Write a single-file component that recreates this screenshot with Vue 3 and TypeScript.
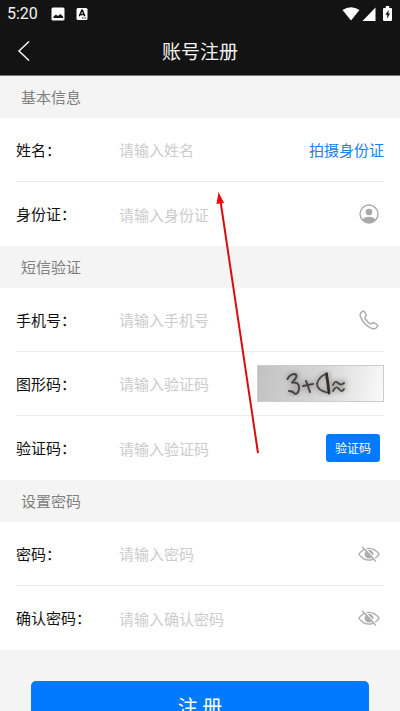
<script setup lang="ts">
import { reactive } from 'vue'

type Extra = 'scan' | 'contact' | 'phone' | 'captcha' | 'sms' | 'eye'

interface Field {
  id: string
  label: string
  placeholder: string
  type: string
  extra: Extra
}

interface Section {
  title: string
  fields: Field[]
}

const sections: Section[] = [
  {
    title: '基本信息',
    fields: [
      { id: 'name', label: '姓名：', placeholder: '请输入姓名', type: 'text', extra: 'scan' },
      { id: 'idcard', label: '身份证：', placeholder: '请输入身份证', type: 'text', extra: 'contact' },
    ],
  },
  {
    title: '短信验证',
    fields: [
      { id: 'phone', label: '手机号：', placeholder: '请输入手机号', type: 'tel', extra: 'phone' },
      { id: 'captcha', label: '图形码：', placeholder: '请输入验证码', type: 'text', extra: 'captcha' },
      { id: 'sms', label: '验证码：', placeholder: '请输入验证码', type: 'text', extra: 'sms' },
    ],
  },
  {
    title: '设置密码',
    fields: [
      { id: 'password', label: '密码：', placeholder: '请输入密码', type: 'password', extra: 'eye' },
      { id: 'confirm', label: '确认密码：', placeholder: '请输入确认密码', type: 'password', extra: 'eye' },
    ],
  },
]

const form = reactive<Record<string, string>>({})
const visible = reactive<Record<string, boolean>>({})

function inputType(field: Field): string {
  return field.type === 'password' && visible[field.id] ? 'text' : field.type
}
</script>

<template>
  <div class="page" lang="zh-CN">
    <header class="top">
      <div class="status">
        <span class="clock">5:20</span>
        <svg class="status-icon" viewBox="0 0 14 14" width="14" height="14" aria-hidden="true">
          <rect x="0.5" y="0.5" width="13" height="13" rx="1.5" fill="#fff" />
          <path d="M2.5 11V9.5L5 7.500l1.800 1.500L9.500 7l2.500 2.500V11z" fill="#131313" />
        </svg>
        <svg class="status-icon" viewBox="0 0 14 14" width="14" height="14" aria-hidden="true">
          <rect x="1.5" y="1" width="11" height="12" rx="1.5" fill="#fff" />
          <path d="M4.3 9.3L6.8 3.2h.6l2.4 6.1M5.2 7.4h3.7" fill="none" stroke="#131313" stroke-width="1.5" />
          <path d="M7 11h4.5" stroke="#131313" stroke-width="1" stroke-dasharray="1 .6" />
        </svg>
        <span class="spacer"></span>
        <svg viewBox="0 0 52 16" width="52" height="16" aria-hidden="true">
          <path d="M1.500 4Q10 -1.500 18.500 4L10 14.600z" fill="#fff" />
          <path d="M34.500 1.500V15H21.500z" fill="#fff" />
          <path d="M43 2h1.800V0h3.400v2H50q1 0 1 1v11q0 1-1 1h-7q-1 0-1-1V3q0-1 1-1z" fill="#fff" />
          <path d="M47.800 3.800L44.400 8.700h1.800v4L49 7.500h-1.700z" fill="#131313" />
        </svg>
      </div>
      <nav class="nav">
        <button class="back" type="button" aria-label="返回">
          <svg viewBox="0 0 14 20" width="14" height="20">
            <path d="M12 .5L2 10L12 19.500" fill="none" stroke="#f4f4f4" stroke-width="1.500" />
          </svg>
        </button>
        <h1>账号注册</h1>
      </nav>
    </header>

    <form @submit.prevent>
      <section v-for="section in sections" :key="section.title">
        <h2>{{ section.title }}</h2>
        <div class="rows">
          <div v-for="field in section.fields" :key="field.id" class="row">
            <label :for="field.id">{{ field.label }}</label>
            <input
              :id="field.id"
              v-model="form[field.id]"
              :type="inputType(field)"
              :placeholder="field.placeholder"
            />
            <a v-if="field.extra === 'scan'" class="scan" href="#">拍摄身份证</a>
            <svg v-else-if="field.extra === 'contact'" class="icon" viewBox="0 0 22 22" width="22" height="22" aria-hidden="true">
              <circle cx="11" cy="11" r="9" fill="none" stroke="#a9a9a9" stroke-width="1.400" />
              <circle cx="11" cy="9" r="3.300" fill="#a9a9a9" />
              <path d="M4.700 16.500Q6.500 13.700 11 13.700T17.300 16.500Q15 19.700 11 19.700T4.700 16.500z" fill="#a9a9a9" />
            </svg>
            <svg v-else-if="field.extra === 'phone'" class="icon" viewBox="0 0 22 22" width="22" height="22" aria-hidden="true">
              <path
                d="M2.600 4.200L4.600 2.200Q5.600 1.500 6.300 2.600L8.100 5.500Q8.600 6.600 7.500 7.500Q6.300 8.500 7.300 10Q9.200 12.900 11.800 14.700Q13.100 15.500 14.200 14.300Q15.200 13.200 16.300 13.800L19.200 15.800Q20.200 16.600 19.300 17.600L17.800 19.200Q16.300 20.400 13.700 19.300Q5.700 15.600 2.300 7.400Q1.600 5.400 2.600 4.200z"
                fill="none"
                stroke="#a9a9a9"
                stroke-width="1.400"
              />
            </svg>
            <button v-else-if="field.extra === 'captcha'" class="captcha" type="button" aria-label="刷新图形码">
              <svg viewBox="1 0 125 35" width="125" height="35">
                <defs>
                  <filter id="ink-shadow" x="-20%" y="-20%" width="140%" height="140%">
                    <feGaussianBlur stdDeviation="2.500" />
                  </filter>
                </defs>
                <g fill="none" stroke-linecap="round" stroke-linejoin="round">
                  <path
                    d="M31 12Q37 6 40 9Q40 14 35 17Q42 17 42 22Q41 27 33 26M46 20L56 18M49 15L52 25M70 8Q60 12 60 20Q62 25 71 25M70 8L72 27M76 18Q80 14 82 17T87 16M76 24Q80 20 82 23T87 22"
                    stroke="#8b8784"
                    stroke-width="5"
                    opacity=".55"
                    filter="url(#ink-shadow)"
                  />
                  <path d="M30.500 13Q33 8 38 8Q42 10 35 16.500Q42 16 42 21Q42 28 38 28Q36 25 32 25" stroke="#474442" stroke-width="2" />
                  <path d="M46 20L56 18M49 15Q51 20 53 26" stroke="#474442" stroke-width="2" />
                  <path d="M70 7.500Q61 11 60 18Q60 24 70 26.500" stroke="#474442" stroke-width="1.800" />
                  <path d="M69.500 8Q71 17 72 27" stroke="#332e2a" stroke-width="2.800" />
                  <path d="M76 19Q78 14 81 17T87 17M76 25Q79 19 82 23T87 23" stroke="#474442" stroke-width="1.800" />
                </g>
              </svg>
            </button>
            <button v-else-if="field.extra === 'sms'" class="sms" type="button">验证码</button>
            <button
              v-else
              class="eye"
              type="button"
              aria-label="显示密码"
              @click="visible[field.id] = !visible[field.id]"
            >
              <svg viewBox="0 0 22 18" width="22" height="18">
                <path d="M.8 9.200Q5 3.300 11 3.300T21.200 9.200Q17 15.200 11 15.200T.8 9.200z" fill="none" stroke="#adadad" stroke-width="1.300" />
                <circle cx="11" cy="9.200" r="4.400" fill="#adadad" />
                <path d="M5.500 1.500L19 16" stroke="#fff" stroke-width="1.500" />
                <path d="M4.300 1.800L18 16.500" stroke="#adadad" stroke-width="1.300" />
              </svg>
            </button>
          </div>
        </div>
      </section>

      <div class="actions">
        <button class="submit" type="submit">注 册</button>
      </div>
    </form>

    <svg class="pointer" viewBox="0 0 44 264" width="44" height="264" aria-hidden="true">
      <path d="M4.500 10L42 262" stroke="#d90d0d" stroke-width="2" />
      <path d="M2.500 1L.500 13L8 12z" fill="#f00" />
    </svg>
  </div>
</template>

<style>
html {
  scrollbar-width: none;
}

body {
  background: #f4f4f4;
}
</style>

<style scoped>
.page {
  position: relative;
  overflow: hidden;
  color: #111;
  background: #f4f4f4;
  font-family: "Noto Sans CJK SC", sans-serif;
  font-size: 15px;
  line-height: 24px;
}

button,
input {
  margin: 0;
  padding: 0;
  border: 0;
  background: none;
  font: inherit;
}

svg {
  display: block;
}

.top {
  background: #131313;
  border-bottom: 1px solid #777;
}

.status {
  display: flex;
  align-items: center;
  height: 27px;
  padding: 0 7px;
}

.clock {
  margin-right: 13px;
  color: #f4f4f4;
  font-family: Roboto, sans-serif;
  font-size: 16px;
}

.status-icon {
  margin-right: 10px;
}

.spacer {
  flex: 1;
}

.nav {
  display: grid;
  grid-template-columns: 48px 1fr 48px;
  align-items: center;
  height: 48px;
}

.back {
  justify-self: center;
  padding: 4px;
}

h1 {
  margin: 0;
  color: #f4f4f4;
  font-size: 19px;
  font-weight: 400;
  text-align: center;
}

h2 {
  margin: 0;
  padding: 9px 21px;
  color: #808080;
  font-size: 15px;
  font-weight: 400;
}

.rows {
  padding: 0 16px;
  background: #fff;
}

.row {
  display: flex;
  align-items: center;
  box-sizing: border-box;
  height: 64px;
}

.row:not(:last-child) {
  border-bottom: 1px solid #ececec;
}

label {
  flex: none;
  width: 103px;
}

input {
  flex: 1;
  min-width: 0;
  height: 32px;
  outline: none;
}

input::placeholder {
  color: #ccc;
  opacity: 1;
}

.scan {
  color: #1580f0;
  text-decoration: none;
}

.icon,
.eye,
.sms {
  margin-right: 4px;
}

.captcha {
  border: 1px solid #ccc;
  background: linear-gradient(100deg, #c2c2c2, #d6d6d6 50%, #fafafa);
}

.sms {
  padding: 2px 9px;
  border-radius: 3px;
  color: #fff;
  background: #007aff;
  font-size: 12px;
}

.actions {
  padding: 31px;
}

.submit {
  width: 100%;
  padding: 14px;
  border-radius: 5px;
  color: #fff;
  background: #007aff;
  font-size: 20px;
}

.pointer {
  position: absolute;
  top: 191px;
  left: 216px;
  pointer-events: none;
}
</style>
